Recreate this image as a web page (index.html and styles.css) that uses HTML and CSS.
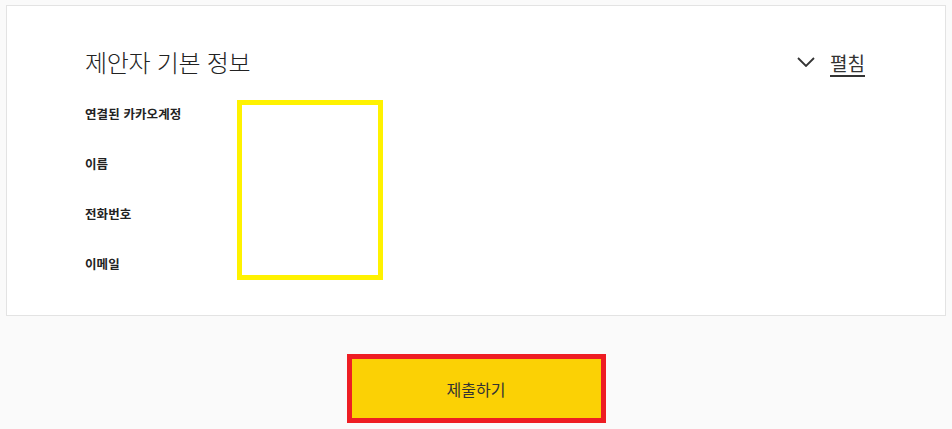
FILE: index.html
```html
<!DOCTYPE html>
<html lang="ko">
<head>
<meta charset="utf-8">
<link rel="stylesheet" href="styles.css">
</head>
<body>
<section class="card">
  <div class="card-head">
    <h2 class="title">제안자 기본 정보</h2>
    <a class="toggle" href="#">
      <svg class="chev" width="18" height="10" viewBox="0 0 18 10"><path d="M1 1 L9 9 L17 1" fill="none" stroke="#333" stroke-width="1.8"/></svg>
      <span class="toggle-text">펼침</span>
    </a>
  </div>
  <div class="info">
    <div class="labels">
      <div class="label">연결된 카카오계정</div>
      <div class="label">이름</div>
      <div class="label">전화번호</div>
      <div class="label">이메일</div>
    </div>
    <div class="highlight"></div>
  </div>
</section>
<div class="actions">
  <button class="submit">제출하기</button>
</div>
</body>
</html>
```
FILE: styles.css
```css
html, body {
  margin: 0;
  padding: 0;
  background: #fafafa;
  font-family: "Noto Sans CJK KR", "Noto Sans", sans-serif;
  color: #222;
}
.card {
  margin: 5px 6px 0;
  background: #fff;
  border: 1px solid #e3e3e3;
  padding: 39px 80px 15px 78px;
}
.card-head {
  display: flex;
  align-items: center;
  justify-content: space-between;
  height: 34px;
}
.title {
  margin: 0;
  font-size: 24px;
  font-weight: 300;
  line-height: 34px;
  color: #222;
  letter-spacing: -0.3px;
}
.toggle {
  display: flex;
  align-items: center;
  gap: 15px;
  text-decoration: none;
  color: #333;
}
.chev {
  display: block;
}
.toggle-text {
  font-size: 19px;
  line-height: 24px;
  border-bottom: 2px solid #333;
  margin-top: 3px;
}
.info {
  display: flex;
  margin-top: 21px;
}
.labels {
  width: 152px;
  display: flex;
  flex-direction: column;
}
.label {
  height: 50px;
  line-height: 28px;
  font-size: 12.5px;
  font-weight: 700;
  color: #222;
  letter-spacing: 0.1px;
}
.highlight {
  width: 146px;
  height: 180px;
  box-sizing: border-box;
  border: 5px solid #fff200;
}
.actions {
  display: flex;
  justify-content: center;
  margin-top: 38px;
}
.submit {
  width: 259px;
  height: 69px;
  box-sizing: border-box;
  background: #fbd105;
  border: 5px solid #ee1d23;
  font-family: "Noto Sans CJK KR", "Noto Sans", sans-serif;
  font-size: 16px;
  color: #333;
  padding: 0;
  cursor: pointer;
}
```
